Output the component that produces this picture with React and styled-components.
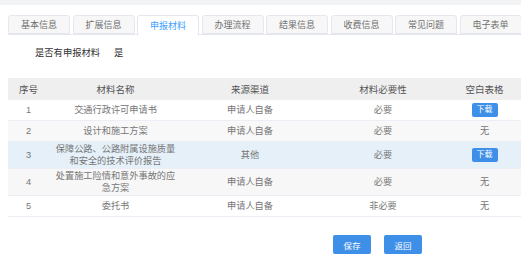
import React, { memo } from "react";
import styled, { createGlobalStyle } from "styled-components";

const GlobalStyle = createGlobalStyle`
  html, body {
    margin: 0;
    padding: 0;
    background: #fff;
    overflow: hidden;
  }
  body {
    font-family: "Liberation Sans", "Noto Sans CJK SC", sans-serif;
  }
`;

const Page = styled.div`
  width: 521px;
  height: 265px;
  background: #fff;
`;

const TopBand = styled.div`
  height: 5px;
  background: #f2f3f5;
`;

const Content = styled.div`
  padding: 10px 0 0 8px;
`;

const TabBar = styled.div`
  display: flex;
  gap: 2.5px;
  height: 20px;
  border-bottom: 1px solid #e4e7ed;
  box-sizing: border-box;
`;

const Tab = styled.div`
  flex: 0 0 62px;
  height: ${(p) => (p.$active ? "20px" : "19px")};
  box-sizing: border-box;
  border: 1px solid #e4e7ed;
  border-bottom: ${(p) => (p.$active ? "none" : "1px solid #e4e7ed")};
  border-radius: 3px 3px 0 0;
  background: ${(p) => (p.$active ? "#fff" : "#f7f7f7")};
  color: ${(p) => (p.$active ? "#409eff" : "#707070")};
  font-size: 9px;
  display: flex;
  align-items: center;
  justify-content: center;
  white-space: nowrap;
`;

const Statement = styled.div`
  display: flex;
  gap: 14px;
  padding: 12px 0 0 27px;
  font-size: 9.3px;
  line-height: 12px;
  color: #333;
`;

const Table = styled.table`
  margin-top: 19px;
  width: 513px;
  border-collapse: collapse;
  table-layout: fixed;
  font-size: 9.2px;
  color: #767676;
`;

const HeadCell = styled.th`
  height: 22px;
  padding: 0;
  background: #efefef;
  color: #555;
  font-weight: normal;
  font-size: 9.5px;
  text-align: center;
`;

const Row = styled.tr`
  background: ${(p) => p.$bg};
  border-bottom: 1px solid #ebeef5;
`;

const Cell = styled.td`
  height: ${(p) => (p.$tall ? "26px" : "20px")};
  padding: 0 5px;
  line-height: 12px;
  text-align: center;
  vertical-align: middle;
`;

const SmallButton = styled.span`
  display: inline-flex;
  align-items: center;
  justify-content: center;
  width: 26px;
  height: 14px;
  border-radius: 2px;
  background: #3d8fe8;
  color: #fff;
  font-size: 8px;
`;

const ButtonBar = styled.div`
  display: flex;
  gap: 13px;
  margin-top: 18px;
  padding-left: 325px;
`;

const Button = styled.button`
  width: 38px;
  height: 19px;
  padding: 0;
  border: none;
  border-radius: 2px;
  background: #3d8fe8;
  color: #fff;
  font-family: inherit;
  font-size: 8.5px;
`;

const tabs = ["基本信息", "扩展信息", "申报材料", "办理流程", "结果信息", "收费信息", "常见问题", "电子表单"];

const rows = [
  { no: 1, name: "交通行政许可申请书", source: "申请人自备", need: "必要", file: true, bg: "#fff" },
  { no: 2, name: "设计和施工方案", source: "申请人自备", need: "必要", file: false, bg: "#f8f8f8" },
  { no: 3, name: "保障公路、公路附属设施质量和安全的技术评价报告", source: "其他", need: "必要", file: true, bg: "#e5f0f9", tall: true },
  { no: 4, name: "处置施工险情和意外事故的应急方案", source: "申请人自备", need: "必要", file: false, bg: "#f7f7f7", tall: true },
  { no: 5, name: "委托书", source: "申请人自备", need: "非必要", file: false, bg: "#fff" },
];

const App = memo(() => {
  return (
    <Page>
      <GlobalStyle />
      <TopBand />
      <Content>
        <TabBar>
          {tabs.map((t) => (
            <Tab key={t} $active={t === "申报材料"}>{t}</Tab>
          ))}
        </TabBar>

        <Statement>
          <span>是否有申报材料</span>
          <span>是</span>
        </Statement>

        <Table>
          <colgroup>
            <col style={{ width: 41 }} />
            <col style={{ width: 133 }} />
            <col style={{ width: 136 }} />
            <col style={{ width: 130 }} />
            <col style={{ width: 73 }} />
          </colgroup>
          <thead>
            <tr>
              <HeadCell>序号</HeadCell>
              <HeadCell>材料名称</HeadCell>
              <HeadCell>来源渠道</HeadCell>
              <HeadCell>材料必要性</HeadCell>
              <HeadCell>空白表格</HeadCell>
            </tr>
          </thead>
          <tbody>
            {rows.map((r) => (
              <Row key={r.no} $bg={r.bg}>
                <Cell $tall={r.tall}>{r.no}</Cell>
                <Cell $tall={r.tall}>{r.name}</Cell>
                <Cell $tall={r.tall}>{r.source}</Cell>
                <Cell $tall={r.tall}>{r.need}</Cell>
                <Cell $tall={r.tall}>
                  {r.file ? <SmallButton>下载</SmallButton> : "无"}
                </Cell>
              </Row>
            ))}
          </tbody>
        </Table>

        <ButtonBar>
          <Button>保存</Button>
          <Button>返回</Button>
        </ButtonBar>
      </Content>
    </Page>
  );
});

export default App;
